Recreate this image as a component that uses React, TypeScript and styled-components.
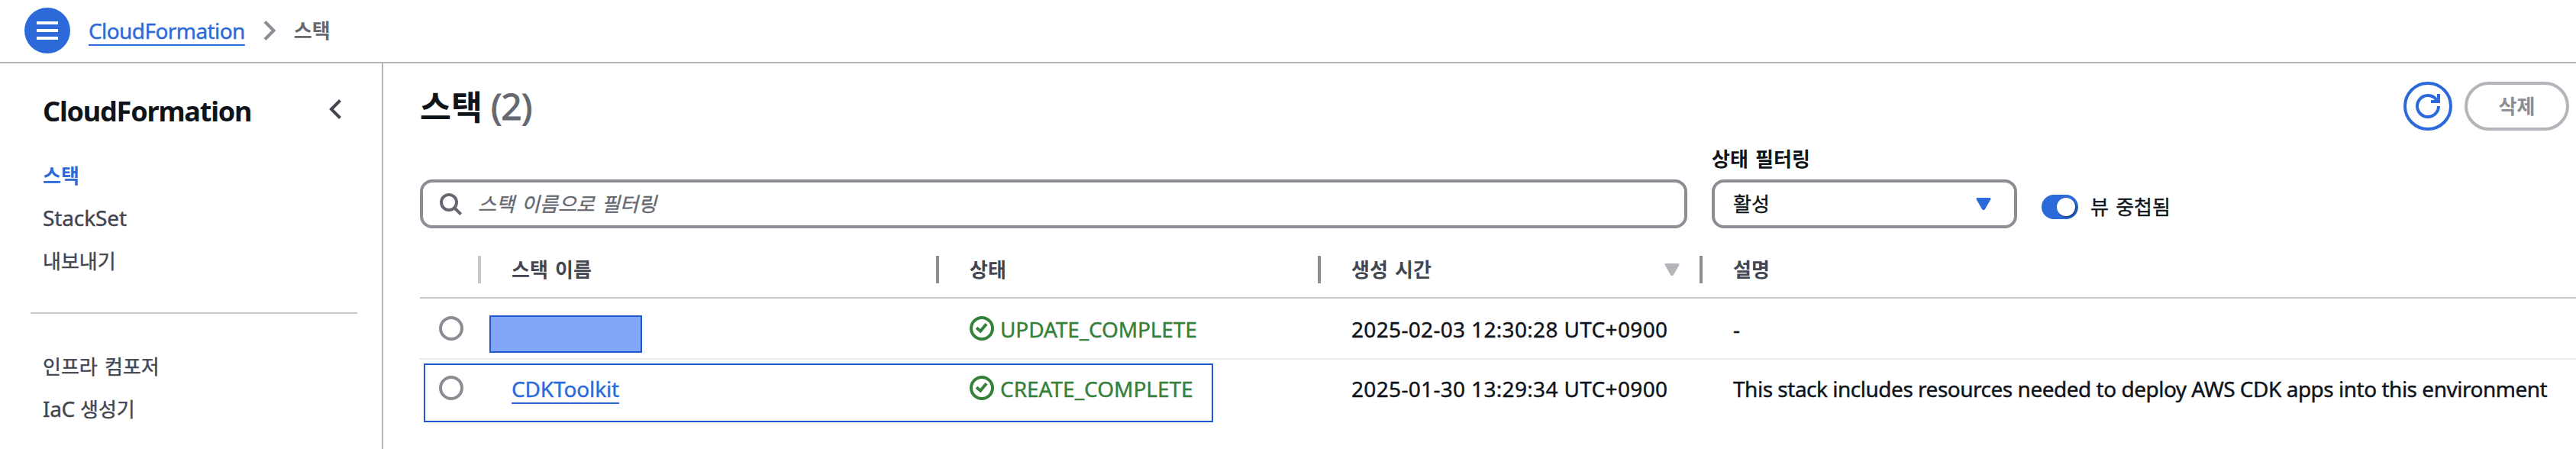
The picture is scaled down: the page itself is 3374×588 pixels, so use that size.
import React from 'react';
import styled, { createGlobalStyle } from 'styled-components';

const color = {
  blue: '#2c6ad9',
  ink: '#0f141a',
  body: '#424650',
  muted: '#656871',
  control: '#8c8c94',
  line: '#b4b4bb',
  softLine: '#c6c6cd',
  rowLine: '#ebebf0',
  green: '#35803a',
  mark: '#2058d0',
  markFill: '#81a6fa',
};

const GlobalStyle = createGlobalStyle`
  * { box-sizing: border-box; }
  body {
    margin: 0;
    background: #fff;
    color: ${color.ink};
    font-family: 'Noto Sans', 'Noto Sans CJK KR', sans-serif;
    font-size: 28px;
    line-height: 40px;
    -webkit-text-stroke-width: 0.4px;
    overflow: hidden;
  }
  svg { display: block; flex: none; }
`;

const Page = styled.div`
  display: flex;
  flex-direction: column;
  width: 3374px;
  height: 588px;
`;

const TopBar = styled.header`
  display: flex;
  align-items: center;
  flex: none;
  height: 83px;
  padding: 0 32px 1px;
  border-bottom: 2px solid ${color.line};
`;

const MenuButton = styled.button`
  display: flex;
  flex-direction: column;
  justify-content: center;
  align-items: center;
  gap: 6px;
  width: 60px;
  height: 60px;
  margin-right: 24px;
  padding: 0;
  border: 0;
  border-radius: 50%;
  background: ${color.blue};
`;

const MenuBar = styled.span`
  width: 28px;
  height: 4px;
  background: #fff;
`;

const Latin = styled.span<{ $spacing?: number }>`
  letter-spacing: ${(p) => p.$spacing ?? 0}px;
  white-space: nowrap;
`;

const Korean = styled.span<{ $bold?: boolean; $tone?: string }>`
  font-size: 26px;
  font-weight: ${(p) => (p.$bold ? 700 : 400)};
  -webkit-text-stroke-width: ${(p) => (p.$bold ? 0 : 0.4)}px;
  color: ${(p) => p.$tone ?? 'inherit'};
  word-spacing: 2.5px;
  white-space: nowrap;
`;

const Link = styled.a<{ $spacing: number }>`
  color: ${color.blue};
  letter-spacing: ${(p) => p.$spacing}px;
  text-decoration: underline;
  text-decoration-thickness: 2px;
  text-decoration-skip-ink: none;
  text-underline-offset: 7px;
`;

const CrumbArrow = styled.svg`
  margin: 0 23px 0 24px;
`;

const Body = styled.div`
  display: flex;
  flex: 1;
  min-height: 0;
`;

const Sidebar = styled.nav`
  flex: none;
  width: 502px;
  padding: 40px 32px 0 40px;
  border-right: 2px solid ${color.line};
`;

const SidebarHead = styled.div`
  display: flex;
  justify-content: space-between;
  align-items: center;
  height: 44px;
  padding: 0 21px 0 16px;
`;

const SidebarTitle = styled.h2`
  margin: 2px 0 0;
  font-size: 36px;
  font-weight: 700;
  line-height: 44px;
  letter-spacing: -1.18px;
  -webkit-text-stroke-width: 0;
`;

const CollapseArrow = styled.svg`
  margin-bottom: 4px;
`;

const NavList = styled.ul<{ $top: number }>`
  display: flex;
  flex-direction: column;
  gap: 16px;
  margin: ${(p) => p.$top}px 0 0;
  padding: 0 0 0 16px;
  list-style: none;
  color: ${color.body};
`;

const NavItem = styled.li`
  height: 40px;
`;

const Divider = styled.hr`
  height: 2px;
  margin: 48px 0 0;
  border: 0;
  background: ${color.softLine};
`;

const Main = styled.main`
  flex: 1;
  min-width: 0;
  padding: 24px 0 0 48px;
`;

const HeadingRow = styled.div`
  display: flex;
  align-items: center;
  height: 64px;
  padding-right: 9px;
`;

const Heading = styled.h1`
  display: flex;
  flex: 1;
  align-items: baseline;
  gap: 11px;
  margin: 0;
  line-height: 62px;
  font-size: 44.5px;
  -webkit-text-stroke-width: 0;
`;

const Count = styled.span`
  color: ${color.muted};
  font-size: 48px;
  font-weight: 400;
  letter-spacing: -0.93px;
  -webkit-text-stroke-width: 1px;
`;

const PillButton = styled.button<{ $tone: string; $width: number }>`
  display: flex;
  align-items: center;
  justify-content: center;
  width: ${(p) => p.$width}px;
  height: 64px;
  margin-left: 16px;
  padding: 0;
  border: 4px solid ${(p) => p.$tone};
  border-radius: 32px;
  background: #fff;
  font: inherit;
`;

const FilterRow = styled.div`
  display: flex;
  align-items: flex-end;
  gap: 32px;
  height: 128px;
`;

const Field = styled.div<{ $width: number }>`
  display: flex;
  align-items: center;
  width: ${(p) => p.$width}px;
  height: 64px;
  border: 4px solid ${color.control};
  border-radius: 16px;
`;

const SearchField = styled(Field)`
  gap: 20px;
  padding-left: 20px;
  font-style: italic;
`;

const SelectField = styled(Field)`
  justify-content: space-between;
  padding: 0 30px 0 24px;
`;

const SelectGroup = styled.div`
  display: flex;
  flex-direction: column;
  gap: 7px;
`;

const ToggleGroup = styled.div`
  display: flex;
  align-items: center;
  gap: 16px;
  height: 32px;
  margin-bottom: 12px;
`;

const Toggle = styled.span`
  display: flex;
  align-items: center;
  justify-content: flex-end;
  width: 48px;
  height: 32px;
  padding-right: 4px;
  border-radius: 16px;
  background: ${color.blue};
`;

const Knob = styled.span`
  width: 24px;
  height: 24px;
  border-radius: 50%;
  background: #fff;
  box-shadow: 2px 2px 2px rgba(0, 0, 0, 0.35);
`;

const Row = styled.div<{ $height: number; $line?: string }>`
  position: relative;
  display: grid;
  grid-template-columns: 80px 600px 500px 500px 1fr;
  align-items: center;
  height: ${(p) => p.$height}px;
  border-bottom: ${(p) => (p.$line ? `2px solid ${p.$line}` : '0')};
`;

const HeaderRow = styled(Row)`
  margin-top: 18px;
`;

const HeadCell = styled.div<{ $bar?: string }>`
  display: flex;
  align-items: center;
  justify-content: space-between;
  height: 36px;
  padding: 0 26px 0 40px;
  border-right: ${(p) => (p.$bar ? `4px solid ${p.$bar}` : '0')};
`;

const Cell = styled.div`
  display: flex;
  align-items: center;
  gap: 8px;
  height: 42px;
  padding: 2px 0 0 40px;
`;

const SelectCell = styled.div`
  padding-left: 25px;
`;

const NameMask = styled.div`
  width: 200px;
  height: 49px;
  margin: 15px 0 0 11px;
  border: 2px solid ${color.mark};
  background: ${color.markFill};
`;

const Radio = styled.span`
  display: block;
  width: 32px;
  height: 32px;
  border: 4px solid ${color.control};
  border-radius: 50%;
`;

const Status = styled.span`
  display: flex;
  gap: 8px;
  color: ${color.green};
`;

const StatusIcon = styled.svg`
  margin-top: 3px;
`;

const Outline = styled.div`
  position: absolute;
  top: 5px;
  left: 5px;
  width: 1034px;
  height: 77px;
  border: 2px solid ${color.mark};
`;

const Caret = ({ fill }: { fill: string }) => (
  <svg width="20" height="16" viewBox="0 0 20 16">
    <path d="M2 1.5H18L10.5 14.5H9.5Z" fill={fill} stroke={fill} strokeWidth="3" strokeLinejoin="round" />
  </svg>
);

const StackStatus = ({ label, spacing }: { label: string; spacing: number }) => (
  <Status>
    <StatusIcon width="32" height="32" viewBox="0 0 32 32" fill="none" stroke={color.green}>
      <circle cx="16" cy="16" r="14" strokeWidth="4" />
      <path d="M9 15.2L14.2 19.6L22 10.2" strokeWidth="4" />
    </StatusIcon>
    <Latin $spacing={spacing}>{label}</Latin>
  </Status>
);

export default function App() {
  return (
    <Page>
      <GlobalStyle />
      <TopBar>
        <MenuButton aria-label="menu">
          <MenuBar />
          <MenuBar />
          <MenuBar />
        </MenuButton>
        <Link $spacing={-0.58}>CloudFormation</Link>
        <CrumbArrow width="17" height="26" viewBox="0 0 17 26" fill="none" stroke={color.control} strokeWidth="4">
          <path d="M2 1.5L13.5 13L2 24.5" />
        </CrumbArrow>
        <Korean $bold $tone={color.muted}>스택</Korean>
      </TopBar>
      <Body>
        <Sidebar>
          <SidebarHead>
            <SidebarTitle>CloudFormation</SidebarTitle>
            <CollapseArrow width="17" height="26" viewBox="0 0 17 26" fill="none" stroke={color.body} strokeWidth="4">
              <path d="M15.5 1.5L4 13L15.5 24.5" />
            </CollapseArrow>
          </SidebarHead>
          <NavList $top={42}>
            <NavItem><Korean $bold $tone={color.blue}>스택</Korean></NavItem>
            <NavItem><Latin $spacing={-0.11}>StackSet</Latin></NavItem>
            <NavItem><Korean>내보내기</Korean></NavItem>
          </NavList>
          <Divider />
          <NavList $top={48}>
            <NavItem><Korean>인프라 컴포저</Korean></NavItem>
            <NavItem><Latin $spacing={-0.3}>IaC </Latin><Korean>생성기</Korean></NavItem>
          </NavList>
        </Sidebar>
        <Main>
          <HeadingRow>
            <Heading>스택<Count>(2)</Count></Heading>
            <PillButton $tone={color.blue} $width={64} aria-label="refresh">
              <svg width="32" height="32" viewBox="0 0 32 32" fill="none" stroke={color.blue} strokeWidth="4">
                <path d="M30 16A14 14 0 1 1 27.6 8.2" />
                <path d="M30 0V10H20" />
              </svg>
            </PillButton>
            <PillButton $tone={color.line} $width={137}>
              <Korean $bold $tone={color.control}>삭제</Korean>
            </PillButton>
          </HeadingRow>
          <FilterRow>
            <SearchField $width={1660}>
              <svg width="32" height="32" viewBox="0 0 32 32" fill="none" stroke={color.muted} strokeWidth="4">
                <circle cx="14" cy="14" r="10" />
                <path d="M21 21L29.7 29.7" />
              </svg>
              <Korean $tone={color.muted}>스택 이름으로 필터링</Korean>
            </SearchField>
            <SelectGroup>
              <Korean $bold>상태 필터링</Korean>
              <SelectField $width={400}>
                <Korean>활성</Korean>
                <Caret fill={color.blue} />
              </SelectField>
            </SelectGroup>
            <ToggleGroup>
              <Toggle><Knob /></Toggle>
              <Korean>뷰 중첩됨</Korean>
            </ToggleGroup>
          </FilterRow>
          <HeaderRow $height={74} $line={color.softLine}>
            <HeadCell $bar={color.softLine} />
            <HeadCell $bar={color.control}><Korean $bold $tone={color.body}>스택 이름</Korean></HeadCell>
            <HeadCell $bar={color.control}><Korean $bold $tone={color.body}>상태</Korean></HeadCell>
            <HeadCell $bar={color.control}>
              <Korean $bold $tone={color.body}>생성 시간</Korean>
              <Caret fill={color.line} />
            </HeadCell>
            <HeadCell><Korean $bold $tone={color.body}>설명</Korean></HeadCell>
          </HeaderRow>
          <Row $height={80} $line={color.rowLine}>
            <SelectCell><Radio /></SelectCell>
            <NameMask />
            <Cell><StackStatus label="UPDATE_COMPLETE" spacing={-0.12} /></Cell>
            <Cell><Latin $spacing={0.33}>2025-02-03 12:30:28 UTC+0900</Latin></Cell>
            <Cell>-</Cell>
          </Row>
          <Row $height={74}>
            <SelectCell><Radio /></SelectCell>
            <Cell><Link $spacing={-0.15}>CDKToolkit</Link></Cell>
            <Cell><StackStatus label="CREATE_COMPLETE" spacing={-0.02} /></Cell>
            <Cell><Latin $spacing={0.33}>2025-01-30 13:29:34 UTC+0900</Latin></Cell>
            <Cell>
              <Latin $spacing={-0.49}>
                This stack includes resources needed to deploy AWS CDK apps into this environment
              </Latin>
            </Cell>
            <Outline />
          </Row>
        </Main>
      </Body>
    </Page>
  );
}
